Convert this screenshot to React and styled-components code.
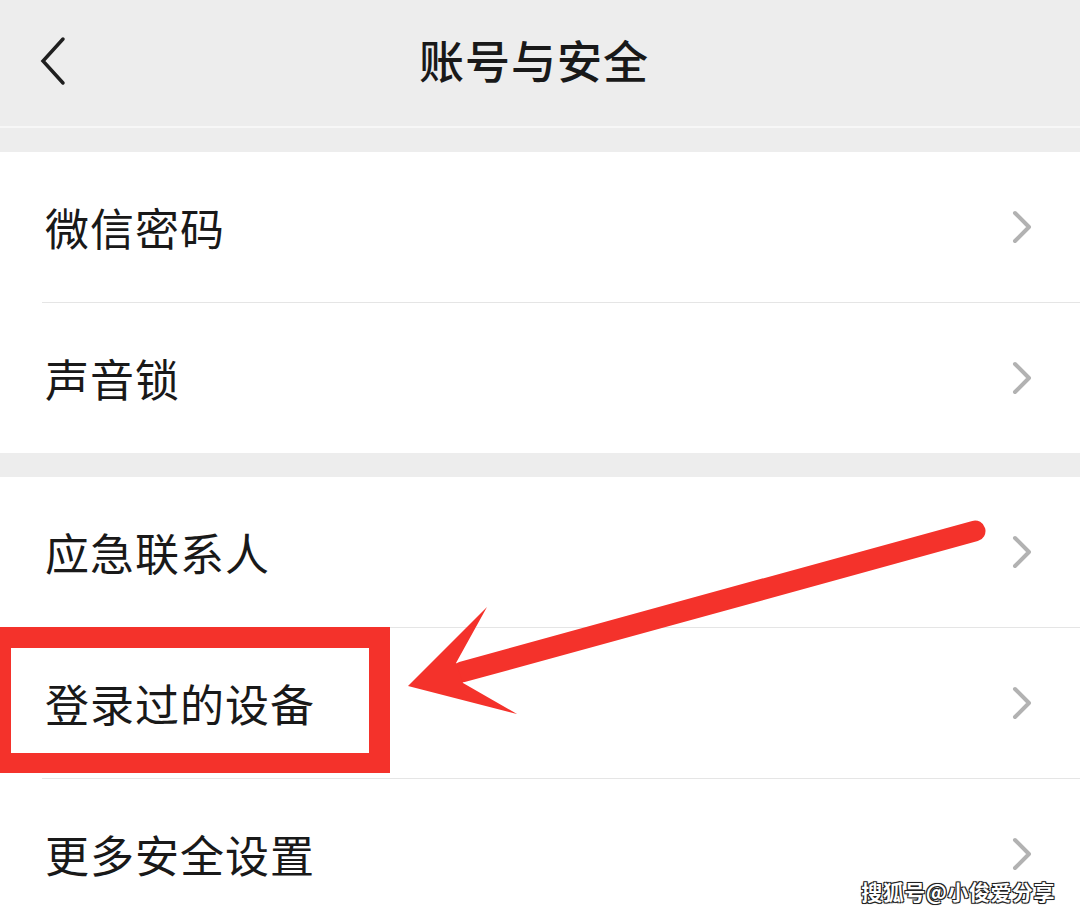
import React from "react";
import styled, { createGlobalStyle } from "styled-components";

const GlobalStyle = createGlobalStyle`
  html, body {
    margin: 0;
    padding: 0;
    background: #ffffff;
  }
  * {
    box-sizing: border-box;
  }
`

const Page = styled.div`
  position: relative;
  display: flex;
  flex-direction: column;
  width: 1080px;
  height: 917px;
  overflow: hidden;
  background: #ededed;
  font-family: "Noto Sans CJK SC", "Noto Sans", sans-serif;
  color: #191919;
  & > * {
    flex-shrink: 0;
  }
`
const Header = styled.header`
  display: flex;
  align-items: center;
  justify-content: center;
  position: relative;
  height: 128px;
  border-bottom: 2px solid #f7f7f7;
  background: #ededed;
`
const BackButton = styled.div`
  position: absolute;
  left: 38px;
  top: 36px;
  width: 30px;
  height: 50px;
`
const Title = styled.h1`
  margin: -8px 12px 0 0;
  font-size: 45px;
  font-weight: 500;
  line-height: 1;
  letter-spacing: 1px;
`
const Section = styled.section`
  display: flex;
  flex-direction: column;
  margin-top: ${({gap}) => gap}px;
  background: #ffffff;
`
const Row = styled.div`
  display: flex;
  align-items: center;
  justify-content: space-between;
  height: 150px;
  padding: 0 48px 0 45px;
`
const Label = styled.span`
  font-size: 44px;
  line-height: 1;
  letter-spacing: 1px;
`
const Divider = styled.div`
  height: 1px;
  margin-left: 42px;
  background: #e5e5e5;
`
const Highlight = styled.div`
  position: absolute;
  left: 0;
  top: 627px;
  width: 390px;
  height: 146px;
  border-style: solid;
  border-color: #f4322b;
  border-width: 21px 21px 20px 11px;
`
const Annotation = styled.svg`
  position: absolute;
  left: 0;
  top: 0;
  width: 1080px;
  height: 917px;
  pointer-events: none;
`
const Watermark = styled.div`
  position: absolute;
  right: 25px;
  bottom: 11px;
  font-size: 21px;
  font-weight: 700;
  color: #ffffff;
  letter-spacing: 0.5px;
  text-shadow: -1px -1px 0 #222, 1px -1px 0 #222, -1px 1px 0 #222, 1px 1px 0 #222, 0 0 2px #000;
`

const Chevron = () => (
  <svg width="20" height="34" viewBox="0 0 20 34">
    <polyline points="3,3 17,17 3,31" fill="none" stroke="#b2b2b2" strokeWidth="4" strokeLinecap="round" strokeLinejoin="round"/>
  </svg>
)

const BackIcon = () => (
  <svg width="30" height="50" viewBox="0 0 30 50">
    <polyline points="25,3 5,25 25,47" fill="none" stroke="#1f1f1f" strokeWidth="3.5" strokeLinecap="round" strokeLinejoin="miter"/>
  </svg>
)

const sections = [
  { gap: 24, items: ["微信密码", "声音锁"] },
  { gap: 24, items: ["应急联系人", "登录过的设备", "更多安全设置"] },
]

const App = () => {
  return (
    <>
      <GlobalStyle/>
      <Page>
        <Header>
          <BackButton><BackIcon/></BackButton>
          <Title>账号与安全</Title>
        </Header>
        {sections.map((section, i) => (
          <Section key={i} gap={section.gap}>
            {section.items.map((item, j) => (
              <React.Fragment key={item}>
                {j > 0 && <Divider/>}
                <Row>
                  <Label>{item}</Label>
                  <Chevron/>
                </Row>
              </React.Fragment>
            ))}
          </Section>
        ))}
        <Highlight/>
        <Annotation viewBox="0 0 1080 917">
          <line x1="975" y1="531" x2="462" y2="672" stroke="#f4322b" strokeWidth="21" strokeLinecap="round"/>
          <polygon points="408,686 487,607 456,663 463,683 517,714" fill="#f4322b"/>
        </Annotation>
        <Watermark>搜狐号@小俊爱分享</Watermark>
      </Page>
    </>
  )
}

export default App
